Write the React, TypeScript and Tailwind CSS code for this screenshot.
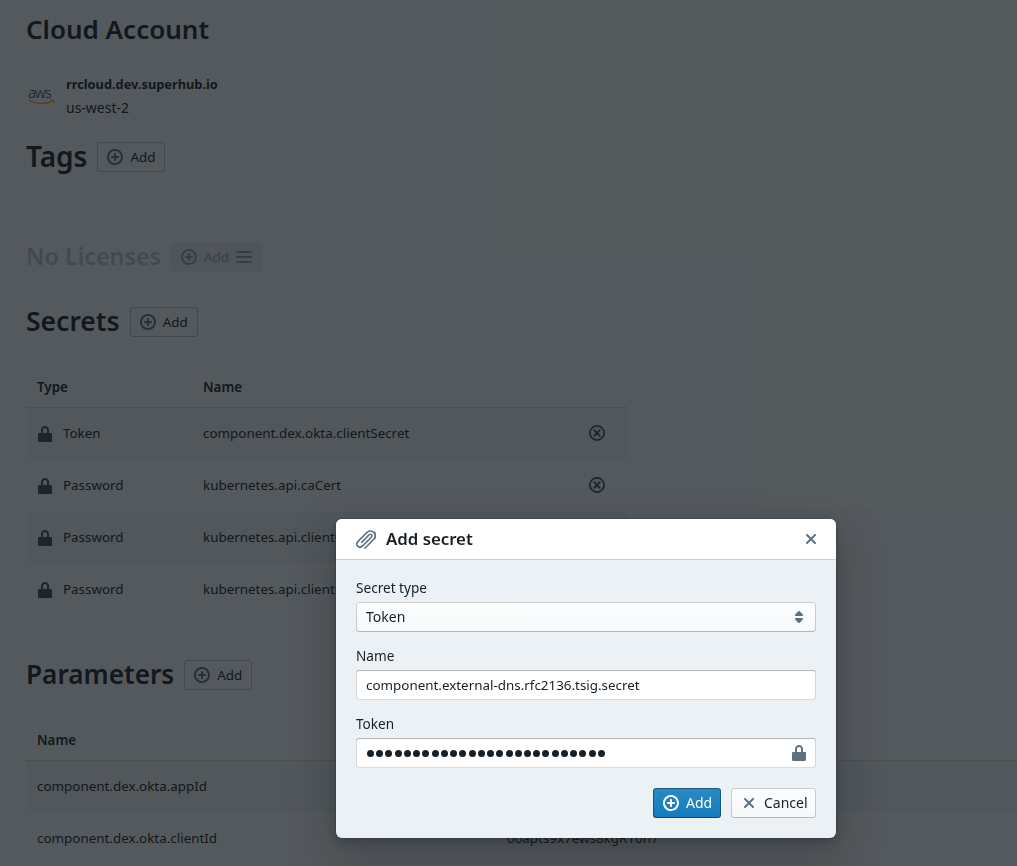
import React, { FC } from "react";

const ADD =
  "M10.99 6.99h-2v-2c0-.55-.45-1-1-1s-1 .45-1 1v2h-2c-.55 0-1 .45-1 1s.45 1 1 1h2v2c0 .55.45 1 1 1s1-.45 1-1v-2h2c.55 0 1-.45 1-1s-.45-1-1-1zm-3-7c-4.42 0-8 3.58-8 8s3.58 8 8 8 8-3.58 8-8-3.58-8-8-8zm0 14c-3.31 0-6-2.69-6-6s2.69-6 6-6 6 2.69 6 6-2.69 6-6 6z";
const LOCK =
  "M13.96 7H12V3.95C12 1.77 10.21 0 8 0S4 1.77 4 3.95V7H1.96c-.55 0-.96.35-.96.9v6.91c0 .54.41 1.19.96 1.19h12c.55 0 1.04-.65 1.04-1.19V7.9c0-.55-.49-.9-1.04-.9zM6 7V3.95c0-1.09.9-1.98 2-1.98s2 .89 2 1.98V7H6z";
const CROSS =
  "M9.41 8l3.29-3.29c.19-.18.3-.43.3-.71a1.003 1.003 0 00-1.71-.71L8 6.59l-3.29-3.3a1.003 1.003 0 00-1.42 1.42L6.59 8 3.3 11.29c-.19.18-.3.43-.3.71a1.003 1.003 0 001.71.71L8 9.41l3.29 3.29c.18.19.43.3.71.3a1.003 1.003 0 00.71-1.71L9.41 8z";
const CARET =
  "M5 7h6a1.003 1.003 0 00.71-1.71l-3-3C8.53 2.11 8.28 2 8 2s-.53.11-.71.29l-3 3A1.003 1.003 0 005 7zm6 2H5a1.003 1.003 0 00-.71 1.71l3 3c.18.18.43.29.71.29s.53-.11.71-.29l3-3A1.003 1.003 0 0011 9z";
const MENU =
  "M1 4h14c.55 0 1-.45 1-1s-.45-1-1-1H1c-.55 0-1 .45-1 1s.45 1 1 1zm14 3H1c-.55 0-1 .45-1 1s.45 1 1 1h14c.55 0 1-.45 1-1s-.45-1-1-1zm0 5H1c-.55 0-1 .45-1 1s.45 1 1 1h14c.55 0 1-.45 1-1s-.45-1-1-1z";
const CLIP =
  "M14.68 2.31A4.54 4.54 0 0011.46.99c-1.15 0-2.31.44-3.19 1.32L.95 9.63c-.63.63-.95 1.46-.95 2.28a3.21 3.21 0 003.23 3.22c.83 0 1.66-.31 2.3-.95l7.31-7.32c.76-.77.76-1.98.01-2.73s-1.99-.76-2.75 0l-6.07 6.08c-.24.25-.24.65.01.9s.65.25.91.01l6.07-6.08c.25-.25.67-.25.91-.01.25.25.25.67 0 .92l-7.31 7.32c-.75.75-2.04.74-2.76.01-.75-.75-.73-2.02.01-2.76L9.2 3.21c1.24-1.24 3.35-1.26 4.58-.03 1.24 1.24 1.24 3.36 0 4.6l-7.12 7.13c-.24.25-.24.64.01.88.24.24.63.24.88.01v-.01l7.13-7.13A4.41 4.41 0 0016 4.51c0-1.16-.44-2.32-1.32-3.2z";

const Icon: FC<{ d: string; size?: number; className?: string }> = ({ d, size = 16, className }) => (
  <svg width={size} height={size} viewBox="0 0 16 16" fill="currentColor" className={className}>
    <path d={d} fillRule="evenodd" />
  </svg>
);

const DeleteIcon: FC<{ className?: string }> = ({ className }) => (
  <svg width="16" height="16" viewBox="0 0 16 16" fill="none" stroke="currentColor" className={className}>
    <circle cx="8" cy="8" r="7.100" strokeWidth="1.700" />
    <path d="M5.200 5.200l5.600 5.600M10.800 5.200l-5.600 5.600" strokeWidth="1.700" strokeLinecap="round" />
  </svg>
);

const AddButton: FC<{ disabled?: boolean }> = ({ disabled }) =>
  disabled ? (
    <button className="flex h-[30px] w-[92px] items-center gap-[7px] rounded-[3px] bg-[#ced9e0]/40 pl-[10px] text-[#5c7080]/60">
      <Icon d={ADD} />
      <span>Add</span>
      <Icon d={MENU} />
    </button>
  ) : (
    <button className="flex h-[30px] w-[68px] items-center gap-[7px] rounded-[3px] border border-[#10161a]/25 pl-[9px] text-[#182026]">
      <Icon d={ADD} className="text-[#5c7080]" />
      <span>Add</span>
    </button>
  );

const secrets = [
  ["Token", "component.dex.okta.clientSecret"],
  ["Password", "kubernetes.api.caCert"],
  ["Password", "kubernetes.api.clientCert"],
  ["Password", "kubernetes.api.clientKey"],
];

const SecretsTable: FC = () => (
  <div className="mt-[30px] w-[601px]">
    <div className="flex h-[41px] items-center border-b border-[#10161a]/15 pl-[11px] font-semibold">
      <div className="w-[166px]">Type</div>
      <div>Name</div>
    </div>
    {secrets.map(([type, name], i) => (
      <div key={name} className={`flex h-[52px] items-center pl-[11px] ${i % 2 === 0 ? "bg-[#bfccd6]/15" : ""}`}>
        <div className="flex w-[166px] items-center gap-[10px]">
          <Icon d={LOCK} className="text-[#394b59]" />
          <span className="pb-[2px]">{type}</span>
        </div>
        <div className="flex-1 pb-[2px]">{name}</div>
        <DeleteIcon className={`mb-[2px] mr-[22px] text-[#394b59] ${i < 2 ? "" : "opacity-0"}`} />
      </div>
    ))}
  </div>
);

const ParametersTable: FC = () => (
  <div className="mt-[31px]">
    <div className="flex h-[40px] items-center border-b border-[#10161a]/15 pl-[11px] font-semibold">
      <div className="w-[470px]">Name</div>
      <div>Value</div>
    </div>
    <div className="flex h-[52px] items-center bg-[#bfccd6]/15 pb-[2px] pl-[11px]">
      <div className="w-[470px]">component.dex.okta.appId</div>
      <div>0oapts8f2nLwq1xT50h7</div>
    </div>
    <div className="flex h-[52px] items-center pb-[2px] pl-[11px]">
      <div className="w-[470px]">component.dex.okta.clientId</div>
      <div>00apts9x7ews8kgR10h7</div>
    </div>
  </div>
);

const Field: FC<{ label: string; children: React.ReactNode }> = ({ label, children }) => (
  <div className="mb-[15px]">
    <div className="mb-[5px] h-[18px] text-[13.600px] leading-[18px]">{label}</div>
    {children}
  </div>
);

const inputClass =
  "flex h-[30px] items-center justify-between rounded-[3px] bg-white pl-[10px] pr-[10px] shadow-[inset_0_0_0_1px_rgba(16,22,26,0.15),inset_0_1px_1px_rgba(16,22,26,0.2)]";

const Dialog: FC = () => (
  <div className="fixed left-[336px] top-[519px] w-[500px] rounded-[6px] bg-[#ebf1f5] shadow-[0_0_0_1px_rgba(16,22,26,0.1),0_4px_8px_rgba(16,22,26,0.2),0_18px_46px_6px_rgba(16,22,26,0.2)]">
    <div className="flex h-[40px] items-center rounded-t-[6px] bg-white pl-[20px] pr-[17px] shadow-[0_1px_0_rgba(16,22,26,0.15)]">
      <Icon d={CLIP} size={20} className="text-[#5c7080]" />
      <div className="ml-[10px] flex-1 text-[16.800px] font-semibold leading-[20px]">Add secret</div>
      <Icon d={CROSS} className="text-[#5c7080]" />
    </div>
    <div className="px-[20px] pt-[20px]">
      <Field label="Secret type">
        <div className="flex h-[30px] items-center justify-between rounded-[3px] bg-[#f5f8fa] bg-gradient-to-b from-white/80 to-white/0 px-[10px] shadow-[inset_0_0_0_1px_rgba(16,22,26,0.2),inset_0_-1px_0_rgba(16,22,26,0.1)]">
          <span className="pb-[2px] text-[14px]">Token</span>
          <Icon d={CARET} className="-mr-[1px] text-[#5c7080]" />
        </div>
      </Field>
      <Field label="Name">
        <div className={inputClass}>component.external-dns.rfc2136.tsig.secret</div>
      </Field>
      <Field label="Token">
        <div className={inputClass}>
          <span className="ml-[1px] flex gap-[2.240px]">
            {Array.from({ length: 26 }).map((_, i) => (
              <i key={i} className="block size-[7px] rounded-full bg-[#182026]" />
            ))}
          </span>
          <Icon d={LOCK} className="-mr-[1px] text-[#5c7080]" />
        </div>
      </Field>
      <div className="flex justify-end gap-[10px] pb-[20px] pt-[5px] text-[14px]">
        <button className="flex h-[30px] w-[68px] items-center gap-[7px] rounded-[3px] bg-[#137cbd] bg-gradient-to-b from-white/10 to-white/0 pl-[10px] text-white shadow-[inset_0_0_0_1px_rgba(16,22,26,0.4),inset_0_-1px_0_rgba(16,22,26,0.2)]">
          <Icon d={ADD} />
          <span className="pb-[2px]">Add</span>
        </button>
        <button className="flex h-[30px] w-[85px] items-center gap-[7px] rounded-[3px] bg-[#f5f8fa] bg-gradient-to-b from-white/80 to-white/0 pl-[10px] shadow-[inset_0_0_0_1px_rgba(16,22,26,0.2),inset_0_-1px_0_rgba(16,22,26,0.1)]">
          <Icon d={CROSS} className="text-[#5c7080]" />
          <span className="pb-[2px]">Cancel</span>
        </button>
      </div>
    </div>
  </div>
);

export default function App() {
  return (
    <div className="relative h-screen overflow-hidden bg-[#f5f8fa] font-['Noto_Sans',sans-serif] text-[13.400px] text-[#182026]">
      <div className="pl-[26px]">
        {/* Cloud account */}
        <h1 className="pt-[11px] text-[26px] font-semibold leading-[36px]">Cloud Account</h1>
        <div className="mt-[26px] flex h-[46px] items-center">
          <div className="flex w-[40px] flex-col pl-[2px]">
            <span className="text-[15px] font-light leading-[13px] tracking-[-1.200px] text-[#252f3e]">aws</span>
            <svg width="28" height="7" viewBox="0 0 28 7" fill="none">
              <path d="M1 1c7 4.500 17 4.500 24 1" stroke="#f90" strokeWidth="1.200" />
              <path d="M22 1h4v3" stroke="#f90" strokeWidth="1" />
            </svg>
          </div>
          <div>
            <div className="text-[12.800px] font-bold leading-[23px]">rrcloud.dev.superhub.io</div>
            <div className="text-[14px] leading-[23px]">us-west-2</div>
          </div>
        </div>

        {/* Tags */}
        <div className="mt-[23px] flex h-[30px] items-center gap-[10px]">
          <h2 className="pb-[3px] text-[28px] font-semibold leading-[30px]">Tags</h2>
          <AddButton />
        </div>

        {/* Licenses */}
        <div className="mt-[70px] flex h-[30px] items-center gap-[10px]">
          <h2 className="pb-[3px] text-[23.300px] font-semibold leading-[30px] text-[#5c7080]/40">No Licenses</h2>
          <AddButton disabled />
        </div>

        {/* Secrets */}
        <div className="mt-[35px] flex h-[30px] items-center gap-[10px]">
          <h2 className="pb-[3px] text-[26.500px] font-semibold leading-[30px]">Secrets</h2>
          <AddButton />
        </div>
        <SecretsTable />

        {/* Parameters */}
        <div className="mt-[44px] flex h-[30px] items-center gap-[10px]">
          <h2 className="pb-[3px] text-[26.200px] font-semibold leading-[30px]">Parameters</h2>
          <AddButton />
        </div>
        <ParametersTable />
      </div>

      <div className="absolute inset-0 bg-[#10161a]/70" />
      <Dialog />
    </div>
  );
}
